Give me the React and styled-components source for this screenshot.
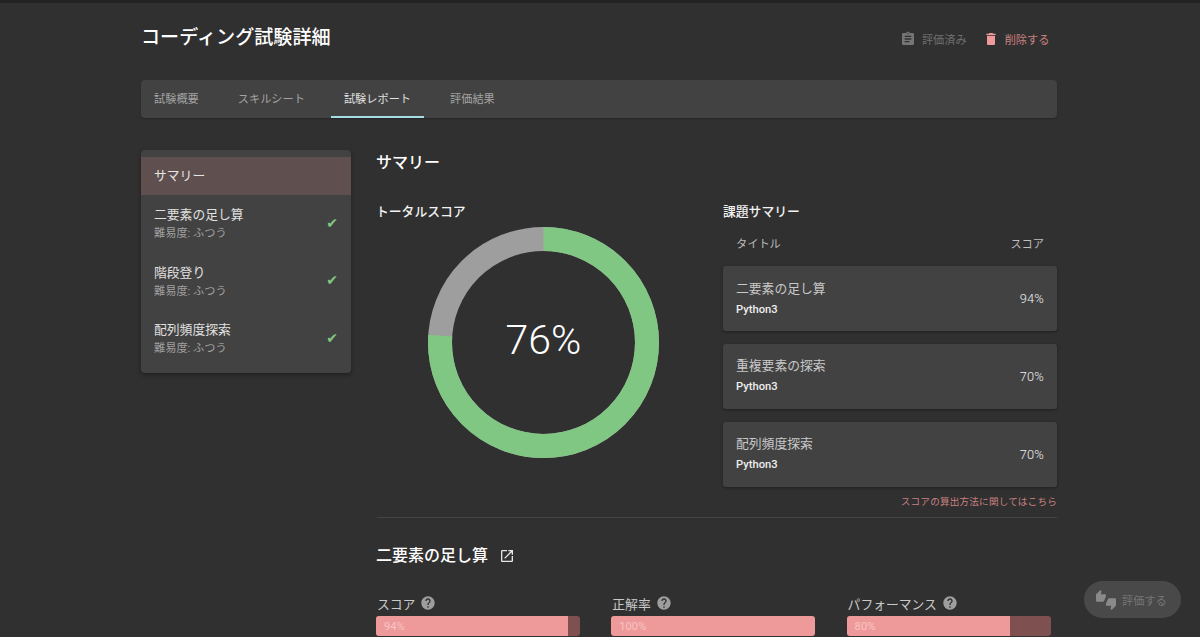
import React from 'react';
import styled, { createGlobalStyle } from 'styled-components';

const GlobalStyle = createGlobalStyle`
  html, body {
    margin: 0;
    height: 100%;
    overflow: hidden;
    background: #303030;
  }
  * {
    box-sizing: border-box;
  }
  body {
    font-family: Roboto, "Noto Sans CJK JP", sans-serif;
    color: #fff;
  }
`;

const Page = styled.div`
  position: relative;
  height: 637px;
  overflow: hidden;
  border-top: 3px solid #222;
  background: #303030;
`;

const Container = styled.div`
  width: 916px;
  margin-left: 141px;
`;

const Header = styled.header`
  display: flex;
  align-items: center;
  justify-content: space-between;
  height: 34px;
  margin-top: 18px;
  padding-right: 7px;
`;

const Title = styled.h1`
  margin: 0;
  font-size: 19.1px;
  line-height: 34px;
  font-weight: 500;
  color: #fff;
`;

const Actions = styled.div`
  display: flex;
  align-items: center;
  gap: 16px;
  padding-top: 2px;
  margin-right: 0.6px;
`;

const Action = styled.span`
  display: flex;
  align-items: center;
  gap: ${({ $danger }) => ($danger ? '6px' : '5.5px')};
  font-size: 11.2px;
  color: ${({ $danger }) => ($danger ? '#c98080' : '#6f6f6f')};
  svg {
    fill: ${({ $danger }) => ($danger ? '#ef9a9a' : '#757575')};
  }
`;

const Tabs = styled.nav`
  display: flex;
  gap: 13px;
  height: 38px;
  margin-top: 25px;
  background: #424242;
  border-radius: 4px;
  box-shadow: 0 1px 2px rgba(0, 0, 0, 0.2);
`;

const Tab = styled.span`
  display: flex;
  align-items: center;
  padding: 0 13px;
  font-size: 11.2px;
  color: ${({ $active }) => ($active ? '#e0e0e0' : '#a3a3a3')};
  border-bottom: 2px solid ${({ $active }) => ($active ? '#a5dde4' : 'transparent')};
`;

const Columns = styled.div`
  display: grid;
  grid-template-columns: 210px 681px;
  column-gap: 25px;
  margin-top: 32px;
  align-items: start;
`;

const Sidebar = styled.aside`
  padding: 7px 0 5px;
  background: #424242;
  border-radius: 4px;
  box-shadow: 0 2px 4px rgba(0, 0, 0, 0.35);
`;

const SummaryItem = styled.div`
  display: flex;
  align-items: center;
  height: 38px;
  padding: 0 0 4px 13px;
  font-size: 12.8px;
  color: #e6e6e6;
  background: #5f4f4f;
`;

const SideItem = styled.div`
  display: flex;
  align-items: center;
  justify-content: space-between;
  height: 57.5px;
  padding: 0 13px;
`;

const SideName = styled.div`
  font-size: 12.8px;
  line-height: 18px;
  color: #e0e0e0;
`;

const SideLevel = styled.div`
  margin: 1px 0 -2px;
  font-size: 11.2px;
  line-height: 18px;
  color: #a0a0a0;
`;

const Check = styled.span`
  margin-top: -2px;
  font-family: "DejaVu Sans", sans-serif;
  font-size: 14px;
  line-height: 1;
  color: #81c784;
`;

const Main = styled.main`
  min-width: 0;
  padding-top: 1px;
`;

const SectionTitle = styled.h2`
  display: flex;
  align-items: center;
  gap: 11px;
  margin: 0;
  font-size: 16px;
  line-height: 24px;
  font-weight: 500;
  color: #fff;
  svg {
    fill: #e6e6e6;
  }
`;

const SummaryGrid = styled.div`
  display: grid;
  grid-template-columns: 347px 334px;
  margin-top: 28px;
`;

const SubTitle = styled.h3`
  margin: 0;
  font-size: 12.8px;
  line-height: 18px;
  font-weight: 500;
  color: #f2f2f2;
`;

const Donut = styled.div`
  position: relative;
  width: 231px;
  height: 231px;
  margin: 6px 0 0 52px;
`;

const DonutLabel = styled.span`
  position: absolute;
  inset: 0;
  display: flex;
  align-items: center;
  justify-content: center;
  padding-bottom: 5px;
  font-size: 41px;
  font-weight: 300;
  color: #fff;
`;

const TableHead = styled.div`
  display: flex;
  justify-content: space-between;
  margin-top: 16px;
  padding: 0 13px;
  font-size: 11.2px;
  line-height: 16px;
  color: #bdbdbd;
`;

const TaskList = styled.div`
  display: flex;
  flex-direction: column;
  gap: 12.4px;
  margin-top: 13px;
`;

const TaskCard = styled.div`
  display: flex;
  align-items: center;
  justify-content: space-between;
  height: 65.4px;
  padding: 0 13px;
  background: #424242;
  border-radius: 3px;
  box-shadow: 0 1px 3px rgba(0, 0, 0, 0.35);
`;

const TaskName = styled.div`
  font-size: 12.8px;
  line-height: 18px;
  color: #c8c8c8;
`;

const TaskLang = styled.div`
  margin-top: 4px;
  font-size: 11.2px;
  line-height: 16px;
  font-weight: 500;
  color: #eee;
`;

const TaskScore = styled.span`
  font-size: 12.8px;
  font-weight: 300;
  letter-spacing: 0.2px;
  color: #f0f0f0;
`;

const ScoreLink = styled.div`
  margin-top: 8.4px;
  text-align: right;
  font-size: 9.6px;
  line-height: 14px;
  letter-spacing: 0.2px;
  color: #c98080;
`;

const Divider = styled.hr`
  height: 1px;
  margin: 8px 0 0 1px;
  border: 0;
  background: #444;
`;

const TaskSection = styled.section`
  margin-top: 26px;
`;

const Metrics = styled.div`
  display: grid;
  grid-template-columns: repeat(3, 204px);
  column-gap: 31.3px;
  margin-top: 26px;
`;

const MetricLabel = styled.div`
  display: flex;
  align-items: center;
  gap: 5px;
  height: 18px;
  padding-left: 1px;
  font-size: 12.8px;
  color: #c8c8c8;
  svg {
    fill: #9e9e9e;
  }
`;

const Bar = styled.div`
  height: 20px;
  margin-top: 4px;
  background: #7e5050;
  border-radius: 3px;
  overflow: hidden;
`;

const BarFill = styled.div`
  height: 100%;
  padding-left: 8px;
  font-size: 11.2px;
  line-height: 21px;
  color: #f6c4c4;
  background: #ef9a9a;
`;

const Fab = styled.div`
  position: absolute;
  left: 1084px;
  top: 578px;
  display: flex;
  align-items: center;
  gap: 6px;
  width: 97px;
  height: 37px;
  padding-left: 12px;
  font-size: 11.2px;
  color: #757575;
  background: #494949;
  border-radius: 19px;
  svg {
    fill: #8a8a8a;
  }
`;

const Icon = ({ d, size = 16 }) => (
  <svg width={size} height={size} viewBox="0 0 24 24" aria-hidden="true">
    <path d={d} />
  </svg>
);

const ICONS = {
  assignment:
    'M19 3h-4.18C14.4 1.84 13.3 1 12 1c-1.3 0-2.4.84-2.82 2H5c-1.1 0-2 .9-2 2v14c0 1.1.9 2 2 2h14c1.1 0 2-.9 2-2V5c0-1.1-.9-2-2-2zm-7 0c.55 0 1 .45 1 1s-.45 1-1 1-1-.45-1-1 .45-1 1-1zm2 14H7v-2h7v2zm3-4H7v-2h10v2zm0-4H7V7h10v2z',
  trash: 'M6 19c0 1.1.9 2 2 2h8c1.1 0 2-.9 2-2V7H6v12zM19 4h-3.5l-1-1h-5l-1 1H5v2h14V4z',
  help:
    'M12 2C6.48 2 2 6.48 2 12s4.48 10 10 10 10-4.48 10-10S17.52 2 12 2zm1 17h-2v-2h2v2zm2.07-7.75l-.9.92C13.45 12.9 13 13.5 13 15h-2v-.5c0-1.1.45-2.1 1.17-2.83l1.24-1.26c.37-.36.59-.86.59-1.41 0-1.1-.9-2-2-2s-2 .9-2 2H8c0-2.21 1.79-4 4-4s4 1.79 4 4c0 .88-.36 1.68-.93 2.25z',
  open:
    'M19 19H5V5h7V3H5c-1.11 0-2 .9-2 2v14c0 1.1.89 2 2 2h14c1.1 0 2-.9 2-2v-7h-2v7zM14 3v2h3.59l-9.83 9.83 1.41 1.41L19 6.41V10h2V3h-7z',
  thumbs:
    'M12 6c0-.55-.45-1-1-1H5.82l.66-3.18.02-.23c0-.31-.13-.59-.33-.8L5.38 0 .44 4.94C.17 5.21 0 5.59 0 6v6.5c0 .83.67 1.5 1.5 1.5h6.75c.62 0 1.15-.38 1.38-.91l2.26-5.29c.07-.17.11-.36.11-.55V6zm10.5 4h-6.75c-.62 0-1.15.38-1.38.91l-2.26 5.29c-.07.17-.11.36-.11.55V18c0 .55.45 1 1 1h5.18l-.66 3.18-.02.24c0 .31.13.59.33.8l.79.78 4.94-4.94c.27-.27.44-.65.44-1.06v-6.5c0-.83-.67-1.5-1.5-1.5z',
};

const tabs = ['試験概要', 'スキルシート', '試験レポート', '評価結果'];
const sideItems = ['二要素の足し算', '階段登り', '配列頻度探索'];
const tasks = [
  { name: '二要素の足し算', score: 94 },
  { name: '重複要素の探索', score: 70 },
  { name: '配列頻度探索', score: 70 },
];
const metrics = [
  { label: 'スコア', value: 94 },
  { label: '正解率', value: 100 },
  { label: 'パフォーマンス', value: 80 },
];

const RADIUS = 103.5;
const CIRCUMFERENCE = 2 * Math.PI * RADIUS;

const ScoreDonut = ({ value }) => (
  <Donut>
    <svg width="231" height="231" viewBox="0 0 231 231" aria-hidden="true">
      <circle cx="115.5" cy="115.5" r={RADIUS} fill="none" stroke="#9e9e9e" strokeWidth="24" />
      <circle
        cx="115.5"
        cy="115.5"
        r={RADIUS}
        fill="none"
        stroke="#81c784"
        strokeWidth="24"
        strokeDasharray={`${(CIRCUMFERENCE * value) / 100} ${CIRCUMFERENCE}`}
        transform="rotate(-90 115.5 115.5)"
      />
    </svg>
    <DonutLabel>{value}%</DonutLabel>
  </Donut>
);

const App = () => (
  <Page>
    <GlobalStyle />
    <Container>
      <Header>
        <Title>コーディング試験詳細</Title>
        <Actions>
          <Action>
            <Icon d={ICONS.assignment} />
            評価済み
          </Action>
          <Action $danger>
            <Icon d={ICONS.trash} />
            削除する
          </Action>
        </Actions>
      </Header>

      <Tabs>
        {tabs.map((tab) => (
          <Tab key={tab} $active={tab === '試験レポート'}>{tab}</Tab>
        ))}
      </Tabs>

      <Columns>
        <Sidebar>
          <SummaryItem>サマリー</SummaryItem>
          {sideItems.map((name) => (
            <SideItem key={name}>
              <div>
                <SideName>{name}</SideName>
                <SideLevel>難易度: ふつう</SideLevel>
              </div>
              <Check>✔</Check>
            </SideItem>
          ))}
        </Sidebar>

        <Main>
          <SectionTitle>サマリー</SectionTitle>
          <SummaryGrid>
            <div>
              <SubTitle>トータルスコア</SubTitle>
              <ScoreDonut value={76} />
            </div>
            <div>
              <SubTitle>課題サマリー</SubTitle>
              <TableHead>
                <span>タイトル</span>
                <span>スコア</span>
              </TableHead>
              <TaskList>
                {tasks.map((task) => (
                  <TaskCard key={task.name}>
                    <div>
                      <TaskName>{task.name}</TaskName>
                      <TaskLang>Python3</TaskLang>
                    </div>
                    <TaskScore>{task.score}%</TaskScore>
                  </TaskCard>
                ))}
              </TaskList>
              <ScoreLink>スコアの算出方法に関してはこちら</ScoreLink>
            </div>
          </SummaryGrid>
          <Divider />

          <TaskSection>
            <SectionTitle>
              二要素の足し算
              <Icon d={ICONS.open} size={16} />
            </SectionTitle>
            <Metrics>
              {metrics.map((metric) => (
                <div key={metric.label}>
                  <MetricLabel>
                    {metric.label}
                    <Icon d={ICONS.help} size={16} />
                  </MetricLabel>
                  <Bar>
                    <BarFill style={{ width: `${metric.value}%` }}>{metric.value}%</BarFill>
                  </Bar>
                </div>
              ))}
            </Metrics>
          </TaskSection>
        </Main>
      </Columns>
    </Container>
    <Fab>
      <Icon d={ICONS.thumbs} size={20} />
      評価する
    </Fab>
  </Page>
);

export default App;
